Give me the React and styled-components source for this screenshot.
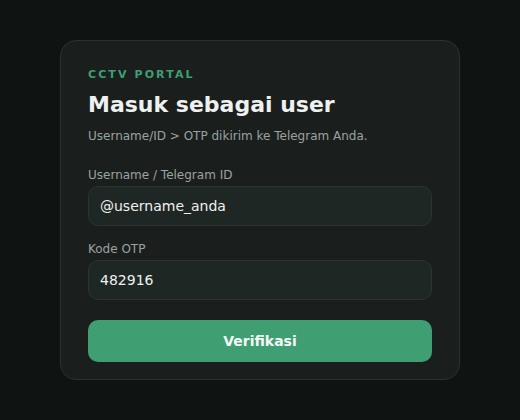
import React from "react";
import styled, { createGlobalStyle } from "styled-components";

const Global = createGlobalStyle`
  html, body { margin: 0; padding: 0; background: #0f1312; }
  body { font-family: "DejaVu Sans", sans-serif; }
  * { box-sizing: border-box; }
`;

const Page = styled.div`
  width: 520px;
  height: 420px;
  display: flex;
  align-items: center;
  justify-content: center;
  background: #0f1312;
`;

const Card = styled.div`
  width: 400px;
  background: #1a1f1e;
  border: 1px solid #2a312e;
  border-radius: 16px;
  padding: 27px 27px 17px;
  display: flex;
  flex-direction: column;
`;

const Kicker = styled.div`
  color: #3f9e72;
  font-size: 11px;
  font-weight: bold;
  letter-spacing: 2.1px;
  line-height: 14px;
`;

const Title = styled.h1`
  margin: 9px 0 0;
  color: #eef1ef;
  font-size: 22px;
  font-weight: bold;
  line-height: 28px;
`;

const Sub = styled.p`
  margin: 9px 0 0;
  color: #9aa39f;
  font-size: 12px;
  line-height: 16px;
`;

const Field = styled.label`
  display: flex;
  flex-direction: column;
  gap: 3px;
  margin-top: ${(p) => p.$mt}px;
`;

const Label = styled.span`
  color: #9aa39f;
  font-size: 12px;
  line-height: 16px;
`;

const Input = styled.input`
  height: 40px;
  width: 100%;
  background: #1f2724;
  border: 1px solid #2b3431;
  border-radius: 10px;
  color: #eef1ef;
  font-family: "DejaVu Sans", sans-serif;
  font-size: 14px;
  padding: 0 11px;
  outline: none;
`;

const Button = styled.button`
  margin-top: 20px;
  height: 42px;
  width: 100%;
  border: none;
  border-radius: 10px;
  background: #3f9e72;
  color: #f4f8f6;
  font-family: "DejaVu Sans", sans-serif;
  font-size: 14px;
  font-weight: bold;
`;

export default function App() {
  return (
    <>
      <Global />
      <Page>
        <Card>
          <Kicker>CCTV PORTAL</Kicker>
          <Title>Masuk sebagai user</Title>
          <Sub>Username/ID &gt; OTP dikirim ke Telegram Anda.</Sub>
          <Field $mt={23}>
            <Label>Username / Telegram ID</Label>
            <Input defaultValue="@username_anda" />
          </Field>
          <Field $mt={15}>
            <Label>Kode OTP</Label>
            <Input defaultValue="482916" />
          </Field>
          <Button>Verifikasi</Button>
        </Card>
      </Page>
    </>
  );
}
